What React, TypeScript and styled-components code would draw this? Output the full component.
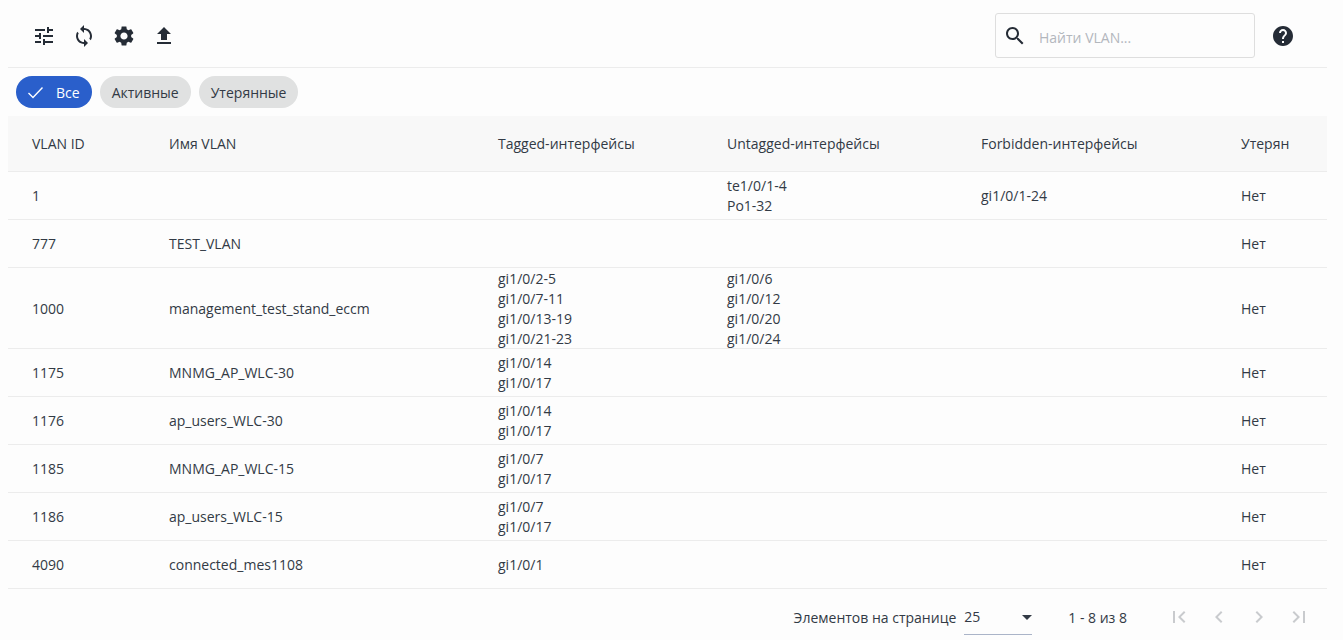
import React from "react";
import styled, { createGlobalStyle } from "styled-components";

const GlobalStyle = createGlobalStyle`
  html, body {
    margin: 0;
    height: 100%;
    background: #fdfdfd;
    font-family: "Open Sans", "Noto Sans", sans-serif;
    font-size: 14px;
    color: #323a45;
  }
`;

const Page = styled.div`
  padding: 0 16px 0 8px;
  height: 640px;
  box-sizing: border-box;
  overflow: hidden;
`;

const Toolbar = styled.div`
  height: 68px;
  display: flex;
  align-items: center;
  padding: 5px 24px 0 16px;
  box-sizing: border-box;
  border-bottom: 1px solid #ececec;
`;

const IconButton = styled.button<{ $faded?: boolean }>`
  width: 40px;
  height: 40px;
  padding: 8px;
  border: 0;
  background: none;
  color: ${(p) => (p.$faded ? "#c9cbce" : "#252c36")};
  svg {
    display: block;
    width: 24px;
    height: 24px;
    fill: currentColor;
  }
`;

const Spacer = styled.div`
  flex: 1;
`;

const SearchBox = styled.div`
  width: 260px;
  height: 45px;
  margin-right: 8px;
  margin-top: -1px;
  box-sizing: border-box;
  display: flex;
  align-items: center;
  padding: 0 7px;
  gap: 12px;
  border: 1px solid #dedede;
  border-radius: 3px;
  svg {
    width: 24px;
    height: 24px;
    fill: #252c36;
    margin-top: 1px;
  }
`;

const SearchInput = styled.input`
  flex: 1;
  min-width: 0;
  border: 0;
  outline: 0;
  padding: 4px 0 0;
  background: none;
  font: inherit;
  color: inherit;
  &::placeholder {
    color: #b3b7bd;
    opacity: 1;
  }
`;

const ChipRow = styled.div`
  display: flex;
  gap: 8px;
  padding: 8px;
`;

const Chip = styled.div<{ $active?: boolean }>`
  height: 32px;
  box-sizing: border-box;
  display: flex;
  align-items: center;
  gap: 11px;
  padding: 0 12px 0 ${(p) => (p.$active ? "11px" : "12px")};
  border-radius: 16px;
  background: ${(p) => (p.$active ? "#2a5fcb" : "#e0e1e1")};
  color: ${(p) => (p.$active ? "#ffffff" : "#323a45")};
  svg {
    width: 18px;
    height: 18px;
    fill: none;
    stroke: #ffffff;
    stroke-width: 1.4;
  }
`;

const Table = styled.table`
  width: 1319px;
  table-layout: fixed;
  border-collapse: collapse;
`;

const HeadRow = styled.tr`
  height: 55px;
  background: #f8f8f8;
`;

const HeadCell = styled.th<{ $width?: number }>`
  width: ${(p) => (p.$width ? `${p.$width}px` : "auto")};
  padding: 0 0 0 24px;
  text-align: left;
  font-weight: 400;
  box-sizing: border-box;
  border-bottom: 1px solid #ececec;
`;

const Row = styled.tr`
  height: 48px;
`;

const Cell = styled.td`
  padding: 0 0 0 24px;
  border-bottom: 1px solid #ececec;
  white-space: nowrap;
  box-sizing: border-box;
`;

const Line = styled.div`
  height: 20px;
  line-height: 22px;
`;

const Paginator = styled.div`
  height: 52px;
  display: flex;
  align-items: center;
  padding: 5px 8px 0 0;
  box-sizing: border-box;
  justify-content: flex-end;
`;

const PageLabel = styled.span`
  margin-right: 8px;
`;

const PageSelect = styled.div`
  width: 68px;
  height: 29px;
  box-sizing: border-box;
  display: flex;
  align-items: center;
  justify-content: space-between;
  margin-top: 6px;
  padding-bottom: 6px;
  border-bottom: 1px solid #aab4c8;
`;

const Arrow = styled.span`
  width: 0;
  height: 0;
  border-left: 5px solid transparent;
  border-right: 5px solid transparent;
  border-top: 5px solid #323a45;
  margin: 2px 0 0;
`;

const RangeLabel = styled.span`
  margin: 0 32px 0 36px;
`;

const icons = {
  tune: "M3 17v2h6v-2H3zM3 5v2h10V5H3zm10 16v-2h8v-2h-8v-2h-2v6h2zM7 9v2H3v2h4v2h2V9H7zm14 4v-2H11v2h10zm-6-4h2V7h4V5h-4V3h-2v6z",
  sync: "M12 4V1L8 5l4 4V6c3.31 0 6 2.69 6 6 0 1.01-.25 1.97-.7 2.8l1.46 1.46C19.54 15.03 20 13.57 20 12c0-4.42-3.58-8-8-8zm0 14c-3.31 0-6-2.69-6-6 0-1.01.25-1.97.7-2.8L5.24 7.74C4.46 8.97 4 10.43 4 12c0 4.42 3.58 8 8 8v3l4-4-4-4v3z",
  settings:
    "M19.14 12.94c.04-.3.06-.61.06-.94 0-.32-.02-.64-.07-.94l2.03-1.58c.18-.14.23-.41.12-.61l-1.92-3.32c-.12-.22-.37-.29-.59-.22l-2.39.96c-.5-.38-1.03-.7-1.62-.94l-.36-2.54c-.04-.24-.24-.41-.48-.41h-3.84c-.24 0-.43.17-.47.41l-.36 2.54c-.59.24-1.13.57-1.62.94l-2.39-.96c-.22-.08-.47 0-.59.22L2.74 8.87c-.12.21-.08.47.12.61l2.03 1.58c-.05.3-.09.63-.09.94s.02.64.07.94l-2.03 1.58c-.18.14-.23.41-.12.61l1.92 3.32c.12.22.37.29.59.22l2.39-.96c.5.38 1.03.7 1.62.94l.36 2.54c.05.24.24.41.48.41h3.84c.24 0 .44-.17.47-.41l.36-2.54c.59-.24 1.13-.56 1.62-.94l2.39.96c.22.08.47 0 .59-.22l1.92-3.32c.12-.22.07-.47-.12-.61l-2.01-1.58zM12 15.6c-1.98 0-3.6-1.62-3.6-3.6s1.62-3.6 3.6-3.6 3.6 1.62 3.6 3.6-1.62 3.6-3.6 3.6z",
  upload: "M9 16h6v-6h4l-7-7-7 7h4zm-4 2h14v2H5z",
  search:
    "M15.5 14h-.79l-.28-.27C15.41 12.59 16 11.11 16 9.5 16 5.91 13.09 3 9.5 3S3 5.91 3 9.5 5.91 16 9.5 16c1.61 0 3.09-.59 4.23-1.57l.27.28v.79l5 4.99L20.49 19l-4.99-5zm-6 0C7.01 14 5 11.99 5 9.5S7.01 5 9.5 5 14 7.01 14 9.5 11.99 14 9.5 14z",
  help: "M12 2C6.48 2 2 6.48 2 12s4.48 10 10 10 10-4.48 10-10S17.52 2 12 2zm1 17h-2v-2h2v2zm2.07-7.75l-.9.92C13.45 12.9 13 13.5 13 15h-2v-.5c0-1.1.45-2.1 1.17-2.83l1.24-1.26c.37-.36.59-.86.59-1.41 0-1.1-.9-2-2-2s-2 .9-2 2H8c0-2.21 1.79-4 4-4s4 1.79 4 4c0 .88-.36 1.68-.93 2.25z",
  first: "M18.41 16.59L13.82 12l4.59-4.59L17 6l-6 6 6 6zM6 6h2v12H6z",
  prev: "M15.41 7.41L14 6l-6 6 6 6 1.41-1.41L10.83 12z",
  next: "M10 6L8.59 7.41 13.17 12l-4.58 4.59L10 18l6-6z",
  last: "M5.59 7.41L10.18 12l-4.59 4.59L7 18l6-6-6-6zM16 6h2v12h-2z",
};

function Icon({ name }: { name: keyof typeof icons }) {
  return (
    <svg viewBox="0 0 24 24">
      <path d={icons[name]} />
    </svg>
  );
}

const columns = [
  { title: "VLAN ID", width: 137 },
  { title: "Имя VLAN", width: 329 },
  { title: "Tagged-интерфейсы", width: 229 },
  { title: "Untagged-интерфейсы", width: 254 },
  { title: "Forbidden-интерфейсы", width: 260 },
  { title: "Утерян", width: 110 },
];

const rows = [
  { id: "1", name: "", tagged: [], untagged: ["te1/0/1-4", "Po1-32"], forbidden: ["gi1/0/1-24"] },
  { id: "777", name: "TEST_VLAN", tagged: [], untagged: [], forbidden: [] },
  {
    id: "1000",
    name: "management_test_stand_eccm",
    tagged: ["gi1/0/2-5", "gi1/0/7-11", "gi1/0/13-19", "gi1/0/21-23"],
    untagged: ["gi1/0/6", "gi1/0/12", "gi1/0/20", "gi1/0/24"],
    forbidden: [],
  },
  { id: "1175", name: "MNMG_AP_WLC-30", tagged: ["gi1/0/14", "gi1/0/17"], untagged: [], forbidden: [] },
  { id: "1176", name: "ap_users_WLC-30", tagged: ["gi1/0/14", "gi1/0/17"], untagged: [], forbidden: [] },
  { id: "1185", name: "MNMG_AP_WLC-15", tagged: ["gi1/0/7", "gi1/0/17"], untagged: [], forbidden: [] },
  { id: "1186", name: "ap_users_WLC-15", tagged: ["gi1/0/7", "gi1/0/17"], untagged: [], forbidden: [] },
  { id: "4090", name: "connected_mes1108", tagged: ["gi1/0/1"], untagged: [], forbidden: [] },
];

function Lines({ items }: { items: string[] }) {
  return (
    <>
      {items.map((item) => (
        <Line key={item}>{item}</Line>
      ))}
    </>
  );
}

export default function App() {
  return (
    <Page>
      <GlobalStyle />
      <Toolbar>
        <IconButton><Icon name="tune" /></IconButton>
        <IconButton><Icon name="sync" /></IconButton>
        <IconButton><Icon name="settings" /></IconButton>
        <IconButton><Icon name="upload" /></IconButton>
        <Spacer />
        <SearchBox>
          <Icon name="search" />
          <SearchInput placeholder="Найти VLAN..." />
        </SearchBox>
        <IconButton><Icon name="help" /></IconButton>
      </Toolbar>
      <ChipRow>
        <Chip $active>
          <svg viewBox="0 0 18 18">
            <path d="M1.5 10l4.5 4.5 9.5-10" />
          </svg>
          Все
        </Chip>
        <Chip>Активные</Chip>
        <Chip>Утерянные</Chip>
      </ChipRow>
      <Table>
        <thead>
          <HeadRow>
            {columns.map((c) => (
              <HeadCell key={c.title} $width={c.width}>{c.title}</HeadCell>
            ))}
          </HeadRow>
        </thead>
        <tbody>
          {rows.map((r) => (
            <Row key={r.id}>
              <Cell><Line>{r.id}</Line></Cell>
              <Cell><Line>{r.name}</Line></Cell>
              <Cell><Lines items={r.tagged} /></Cell>
              <Cell><Lines items={r.untagged} /></Cell>
              <Cell><Lines items={r.forbidden} /></Cell>
              <Cell><Line>Нет</Line></Cell>
            </Row>
          ))}
        </tbody>
      </Table>
      <Paginator>
        <PageLabel>Элементов на странице</PageLabel>
        <PageSelect>
          25
          <Arrow />
        </PageSelect>
        <RangeLabel>1 - 8 из 8</RangeLabel>
        <IconButton $faded><Icon name="first" /></IconButton>
        <IconButton $faded><Icon name="prev" /></IconButton>
        <IconButton $faded><Icon name="next" /></IconButton>
        <IconButton $faded><Icon name="last" /></IconButton>
      </Paginator>
    </Page>
  );
}
